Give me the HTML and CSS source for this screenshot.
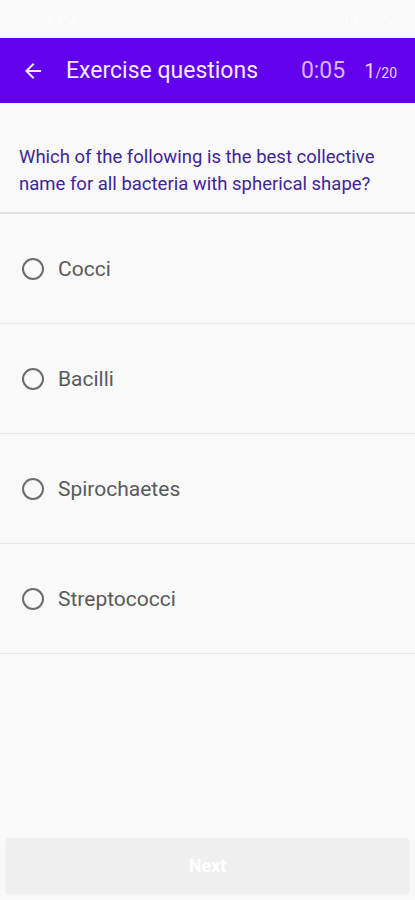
FILE: index.html
```html
<!DOCTYPE html>
<html>
<head>
<meta charset="utf-8">
<link rel="stylesheet" href="styles.css">
</head>
<body>
<div class="screen">
  <div class="status">
    <span class="st-left">12:58 PM</span>
    <span class="st-right">4G 100%</span>
  </div>
  <header class="appbar">
    <svg class="back" width="24" height="24" viewBox="0 0 24 24"><path d="M20 11H7.83l5.59-5.59L12 4l-8 8 8 8 1.41-1.41L7.83 13H20v-2z" fill="#f3eaff"/></svg>
    <div class="title">Exercise questions</div>
    <div class="timer">0:05</div>
    <div class="count"><span class="num">1</span><span class="tot">/20</span></div>
  </header>
  <div class="question">Which of the following is the best collective name for all bacteria with spherical shape?</div>
  <div class="options">
    <div class="option"><span class="radio"></span><span class="label">Cocci</span></div>
    <div class="option"><span class="radio"></span><span class="label">Bacilli</span></div>
    <div class="option"><span class="radio"></span><span class="label">Spirochaetes</span></div>
    <div class="option"><span class="radio"></span><span class="label">Streptococci</span></div>
  </div>
  <div class="spacer"></div>
  <div class="footer"><button class="next">Next</button></div>
</div>
</body>
</html>
```
FILE: styles.css
```css
html, body { margin: 0; padding: 0; }
body { background: #f9f9f9; font-family: Roboto, "Noto Sans", Arial, sans-serif; }
.screen { width: 415px; height: 900px; display: flex; flex-direction: column; background: #f9f9f9; }
.status { height: 38px; display: flex; justify-content: space-between; align-items: center; padding: 0 22px; font-size: 13px; color: #fdfdfd; }
.appbar { height: 65px; background: #6200ee; display: flex; align-items: center; padding: 0 0 0 21px; color: #f3eaff; }
.back { flex: none; }
.title { margin-left: 21px; font-size: 23px; flex: 1; }
.timer { font-size: 23px; color: #d6b8ff; margin-right: 19px; }
.count { margin-right: 18px; color: #e6d6ff; }
.count .num { font-size: 20px; }
.count .tot { font-size: 14px; }
.question { padding: 41px 30px 14px 19px; font-size: 18.5px; line-height: 27px; color: #3d2596; border-bottom: 2px solid #e2e2e2; }
.options { display: flex; flex-direction: column; }
.option { height: 109px; border-bottom: 1px solid #e8e8e8; display: flex; align-items: center; padding-left: 22px; }
.radio { width: 18px; height: 18px; border: 2px solid #6c6c6c; border-radius: 50%; flex: none; }
.label { margin-left: 14px; font-size: 21px; color: #5a5a5a; }
.spacer { flex: 1; }
.footer { padding: 0 6px 7px; }
.next { width: 100%; height: 55px; border: none; background: #efefef; color: #ffffff; font-family: Roboto, "Noto Sans", Arial, sans-serif; font-size: 18px; font-weight: 700; box-shadow: 0 1px 3px rgba(0,0,0,0.06); border-radius: 2px; }
```
